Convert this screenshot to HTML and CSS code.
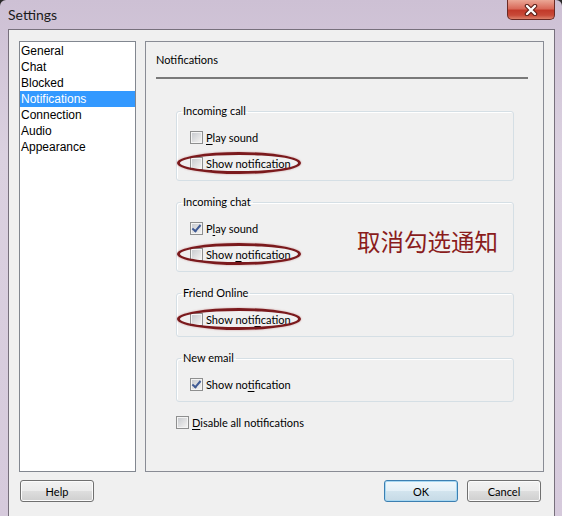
FILE: index.html
```html
<!DOCTYPE html>
<html lang="en">
<head>
  <meta charset="UTF-8">
  <title>Settings</title>
  <link rel="stylesheet" href="styles.css">
</head>
<body>
  <div class="window">
    <div class="titlebar">
      <span class="title">Settings</span>
      <button class="close" aria-label="close">
        <svg width="16" height="12" viewBox="0 0 16 12">
          <path d="M4 2 L12 10 M12 2 L4 10" stroke="#5b1f17" stroke-width="4.5" stroke-linecap="round"/>
          <path d="M4 2 L12 10 M12 2 L4 10" stroke="#fff" stroke-width="2.4" stroke-linecap="round"/>
        </svg>
      </button>
    </div>

    <div class="client">
      <div class="main">
        <ul class="nav">
          <li>General</li>
          <li>Chat</li>
          <li>Blocked</li>
          <li class="selected">Notifications</li>
          <li>Connection</li>
          <li>Audio</li>
          <li>Appearance</li>
        </ul>

        <div class="panel">
          <div class="panel-title">Notifications</div>
          <div class="separator"></div>

          <div class="groups">
            <fieldset class="group">
              <legend>Incoming call</legend>
              <div class="row"><span class="box"></span><span><u>P</u>lay sound</span></div>
              <div class="row marked"><span class="box"></span><span><u>S</u>how notification</span></div>
            </fieldset>

            <fieldset class="group">
              <legend>Incoming chat</legend>
              <div class="row"><span class="box checked"></span><span>P<u>l</u>ay sound</span></div>
              <div class="row marked"><span class="box"></span><span>Show <u>n</u>otification</span></div>
            </fieldset>

            <fieldset class="group">
              <legend>Friend Online</legend>
              <div class="row marked"><span class="box"></span><span>Show noti<u>f</u>ication</span></div>
            </fieldset>

            <fieldset class="group">
              <legend>New email</legend>
              <div class="row"><span class="box checked"></span><span>Show no<u>t</u>ification</span></div>
            </fieldset>

            <div class="row plain"><span class="box"></span><span><u>D</u>isable all notifications</span></div>
          </div>

          <div class="note">取消勾选通知</div>
        </div>
      </div>

      <div class="buttons">
        <button class="button">Help</button>
        <div class="spacer"></div>
        <button class="button default">OK</button>
        <button class="button">Cancel</button>
      </div>
    </div>
  </div>
</body>
</html>
```

FILE: styles.css
```css
body {
  margin: 0;
  background-color: #2a2a2a;
  font-family: "Lato", "Liberation Sans", sans-serif;
}

.window {
  width: 562px;
  height: 516px;
  display: flex;
  flex-direction: column;
  border-radius: 6px 6px 0 0;
  background: linear-gradient(180deg, #cdc0d4 0%, #dbd1e0 30%, #d6cadc 100%);
  box-sizing: border-box;
}

.titlebar {
  height: 29px;
  display: flex;
  align-items: flex-start;
  justify-content: space-between;
  padding: 0 7px 0 8px;
  flex-shrink: 0;
}

.title {
  align-self: center;
  font-size: 14px;
  color: #1a1a1a;
}

.close {
  width: 48px;
  height: 20px;
  padding: 0;
  border: 1px solid #6a2a24;
  border-top: none;
  border-radius: 0 0 5px 5px;
  background: linear-gradient(180deg, #eba796 0%, #d96a5a 45%, #c23a2a 55%, #c84a38 80%, #dc806a 100%);
  display: flex;
  align-items: center;
  justify-content: center;
}

.client {
  margin: 0 7px 0 8px;
  flex: 1;
  display: flex;
  flex-direction: column;
  background: #f0f0f0;
  border: 1px solid #77707c;
  border-bottom: none;
  padding: 11px 10px 6px 10px;
}

.main {
  height: 431px;
  display: flex;
  gap: 9px;
}

.nav {
  list-style: none;
  margin: 0;
  padding: 1px 0 0 0;
  width: 117px;
  box-sizing: border-box;
  background: #fff;
  border: 1px solid #828790;
  font-family: "Liberation Sans", Arial, sans-serif;
  font-size: 12px;
}

.nav li {
  height: 16px;
  line-height: 16px;
  padding-left: 1px;
  color: #000;
}

.nav .selected {
  background: #3399ff;
  color: #fff;
}

.panel {
  flex: 1;
  position: relative;
  border: 1px solid #898c95;
  padding: 10px 15px 0 10px;
  font-size: 11px;
  color: #000;
}

.panel-title {
  line-height: 16px;
}

.separator {
  height: 2px;
  margin-top: 9px;
  background: #797979;
}

.groups {
  margin-top: 25px;
  padding: 0 14px 0 20px;
}

.group {
  margin: 0 0 14px 0;
  padding: 6px 0 4px 0;
  border: 1px solid #d5dfe5;
  border-radius: 3px;
  box-shadow: inset 1px 1px 0 #fff;
}

.group legend {
  margin-left: 4px;
  padding: 0 2px;
  line-height: 14px;
}

.row {
  height: 26px;
  display: flex;
  align-items: center;
  padding-left: 13px;
}

.row.plain {
  padding-left: 0;
  margin-top: -7px;
}

.row u {
  text-underline-offset: 2px;
}

.marked {
  position: relative;
}

.marked::after {
  content: "";
  position: absolute;
  left: 0;
  top: 2px;
  width: 124px;
  height: 22px;
  box-sizing: border-box;
  border: 3px solid #7b1a1d;
  border-radius: 50%;
  box-shadow: 0 0 2px rgba(160, 40, 40, 0.45);
}

.box {
  width: 13px;
  height: 13px;
  box-sizing: border-box;
  border: 1px solid #8e8f8f;
  background: linear-gradient(135deg, #c4c7cc 0%, #e8e8e8 70%, #f6f6f6 100%);
  box-shadow: inset 0 0 0 1px #f4f4f4;
  margin-right: 3px;
  flex-shrink: 0;
  position: relative;
}

.box.checked::before {
  content: "";
  position: absolute;
  left: 3px;
  top: 0px;
  width: 3px;
  height: 7px;
  border: solid #3f5a94;
  border-width: 0 2px 2px 0;
  transform: rotate(40deg);
}

.note {
  position: absolute;
  left: 211px;
  top: 187px;
  font-family: "Noto Sans CJK SC", sans-serif;
  font-size: 23.5px;
  line-height: 24px;
  color: #8a1c1c;
}

.buttons {
  display: flex;
  margin-top: 8px;
  padding: 0 3px 0 1px;
  gap: 9px;
}

.spacer {
  flex: 1;
}

.button {
  width: 74px;
  height: 22px;
  padding: 0;
  font-family: "Lato", "Liberation Sans", sans-serif;
  font-size: 11px;
  color: #000;
  border: 1px solid #707070;
  border-radius: 3px;
  background: linear-gradient(180deg, #f2f2f2 0%, #ebebeb 48%, #dddddd 52%, #cfcfcf 100%);
  box-shadow: inset 0 0 0 1px #fbfbfb;
}

.button.default {
  border-color: #3c7fb1;
  box-shadow: inset 0 0 0 1px #a8d8f2;
  background: linear-gradient(180deg, #f2f8fb 0%, #e4f0f7 48%, #d2e4ee 52%, #c6dae6 100%);
}
```
